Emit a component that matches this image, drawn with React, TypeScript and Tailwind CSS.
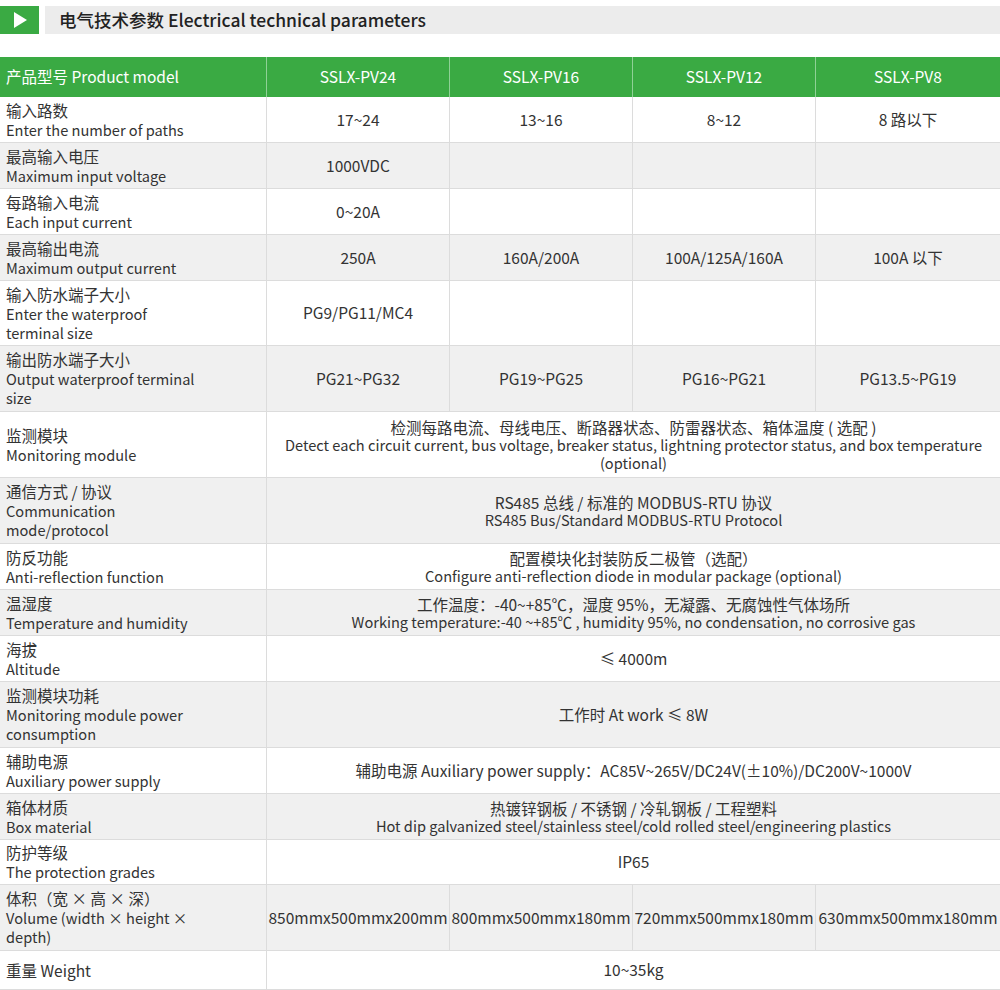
type Row = { zh: string; en?: string; h: string; cells: (string | string[])[]; span?: boolean };

const rows: Row[] = [
  { zh: '输入路数', en: 'Enter the number of paths', h: 'h-[46px]', cells: ['17~24', '13~16', '8~12', '8 路以下'] },
  { zh: '最高输入电压', en: 'Maximum input voltage', h: 'h-[46px]', cells: ['1000VDC', '', '', ''] },
  { zh: '每路输入电流', en: 'Each input current', h: 'h-[46px]', cells: ['0~20A', '', '', ''] },
  { zh: '最高输出电流', en: 'Maximum output current', h: 'h-[46px]', cells: ['250A', '160A/200A', '100A/125A/160A', '100A 以下'] },
  { zh: '输入防水端子大小', en: 'Enter the waterproof terminal size', h: 'h-[65px]', cells: ['PG9/PG11/MC4', '', '', ''] },
  { zh: '输出防水端子大小', en: 'Output waterproof terminal size', h: 'h-[66px]', cells: ['PG21~PG32', 'PG19~PG25', 'PG16~PG21', 'PG13.5~PG19'] },
  { zh: '监测模块', en: 'Monitoring module', h: 'h-[66px]', span: true, cells: [['检测每路电流、母线电压、断路器状态、防雷器状态、箱体温度 ( 选配 )', 'Detect each circuit current, bus voltage, breaker status, lightning protector status, and box temperature (optional)']] },
  { zh: '通信方式 / 协议', en: 'Communication mode/protocol', h: 'h-[66px]', span: true, cells: [['RS485 总线 / 标准的 MODBUS-RTU 协议', 'RS485 Bus/Standard MODBUS-RTU Protocol']] },
  { zh: '防反功能', en: 'Anti-reflection function', h: 'h-[46px]', span: true, cells: [['配置模块化封装防反二极管（选配）', 'Configure anti-reflection diode in modular package (optional)']] },
  { zh: '温湿度', en: 'Temperature and humidity', h: 'h-[46px]', span: true, cells: [['工作温度：-40~+85℃，湿度 95%，无凝露、无腐蚀性气体场所', 'Working temperature:-40 ~+85℃ , humidity 95%, no condensation, no corrosive gas']] },
  { zh: '海拔', en: 'Altitude', h: 'h-[46px]', span: true, cells: ['≤ 4000m'] },
  { zh: '监测模块功耗', en: 'Monitoring module power consumption', h: 'h-[66px]', span: true, cells: ['工作时 At work ≤ 8W'] },
  { zh: '辅助电源', en: 'Auxiliary power supply', h: 'h-[46px]', span: true, cells: ['辅助电源 Auxiliary power supply：AC85V~265V/DC24V(±10%)/DC200V~1000V'] },
  { zh: '箱体材质', en: 'Box material', h: 'h-[46px]', span: true, cells: [['热镀锌钢板 / 不锈钢 / 冷轧钢板 / 工程塑料', 'Hot dip galvanized steel/stainless steel/cold rolled steel/engineering plastics']] },
  { zh: '防护等级', en: 'The protection grades', h: 'h-[45px]', span: true, cells: ['IP65'] },
  { zh: '体积（宽 × 高 × 深）', en: 'Volume (width × height × depth)', h: 'h-[66px]', cells: ['850mmx500mmx200mm', '800mmx500mmx180mm', '720mmx500mmx180mm', '630mmx500mmx180mm'] },
  { zh: '重量 Weight', h: 'h-[39px]', span: true, cells: ['10~35kg'] },
];

function Cell({ v }: { v: string | string[] }) {
  if (Array.isArray(v))
    return (
      <div className="text-center leading-[18px]">
        <div className="text-[15.5px]">{v[0]}</div>
        <div className="text-[14.6px]">{v[1]}</div>
      </div>
    );
  return <div className="text-[15.5px] text-center">{v}</div>;
}

export default function App() {
  const font = { fontFamily: '"Noto Sans CJK SC", "Noto Sans", sans-serif' };
  return (
    <div className="w-[1000px] h-[990px] bg-white text-[#333]" style={font}>
      <div className="flex gap-[6px] pt-[6px] h-[57px]">
        <div className="w-[39px] h-[28px] bg-[#3aaa43] flex items-center justify-center">
          <svg width="14" height="16" viewBox="0 0 14 16"><path d="M1 0 L14 8 L1 16 Z" fill="#fff" /></svg>
        </div>
        <div className="flex-1 h-[28px] bg-[#ececec] flex items-center pl-[14px] text-[17.5px] font-medium text-[#222]">
          电气技术参数 Electrical technical parameters
        </div>
      </div>
      <div className="grid grid-cols-[267px_183px_183px_183px_184px]">
        <div className="h-[40px] bg-[#3aaa43] text-white text-[15.5px] flex items-center pl-[6px] border-r border-[#8fd196]">产品型号 Product model</div>
        {['SSLX-PV24', 'SSLX-PV16', 'SSLX-PV12', 'SSLX-PV8'].map((m, i) => (
          <div key={m} className={`h-[40px] bg-[#3aaa43] text-white text-[15.5px] flex items-center justify-center ${i < 3 ? 'border-r border-[#8fd196]' : ''}`}>{m}</div>
        ))}
        {rows.map((r, ri) => {
          const bg = ri % 2 === 0 ? 'bg-white' : 'bg-[#f0f0f0]';
          return [
            <div key={`l${ri}`} className={`${r.h} ${bg} border-b border-r border-[#dcdcdc] flex flex-col justify-center pl-[6px] pr-[60px] leading-[19px] text-[15.5px]`}>
              <div className="whitespace-nowrap">{r.zh}</div>
              {r.en && <div className="text-[14.6px]">{r.en}</div>}
            </div>,
            ...r.cells.map((c, ci) => (
              <div
                key={`c${ri}-${ci}`}
                className={`${r.h} ${bg} border-b border-[#dcdcdc] flex items-center justify-center px-[2px] ${r.span ? 'col-span-4' : ''} ${!r.span && ci < 3 ? 'border-r' : ''}`}
              >
                <Cell v={c} />
              </div>
            )),
          ];
        })}
      </div>
    </div>
  );
}
